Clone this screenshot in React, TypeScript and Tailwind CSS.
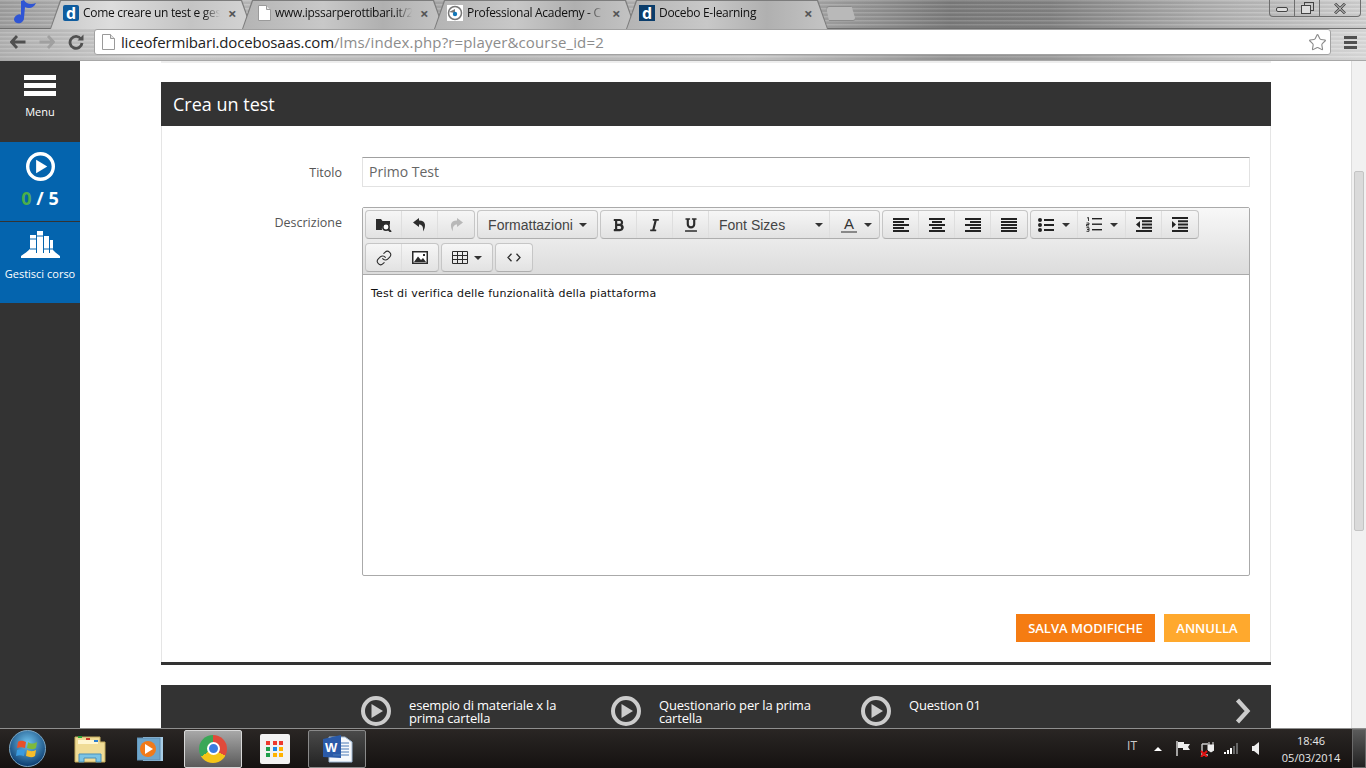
import { ReactNode } from "react";
import { FaBold, FaItalic, FaUnderline } from "react-icons/fa";
import { Link, Star } from "lucide-react";

const TABS = [
    { title: "Come creare un test e ges", icon: "d", active: true },
    { title: "www.ipssarperottibari.it/2", icon: "file", active: false },
    { title: "Professional Academy - C", icon: "ring", active: false },
    { title: "Docebo E-learning", icon: "square", active: false },
];

const NEXT_ITEMS = [
    "esempio di materiale x la prima cartella",
    "Questionario per la prima cartella",
    "Question 01",
];

const PlayCircle = ({ size, color, stroke }: { size: number; color: string; stroke: number }) => (
    <svg width={size} height={size} viewBox="0 0 30 30" className="shrink-0">
        <circle cx="15" cy="15" r={15 - stroke / 2} fill="none" stroke={color} strokeWidth={stroke} />
        <path d="M10.5 8 L22 15 L10.5 22 Z" fill={color} />
    </svg>
);

const FileIcon = () => (
    <svg width="13" height="16" viewBox="0 0 13 16" className="shrink-0">
        <path d="M.5.5h8l4 4v11H.5z" fill="#fff" stroke="#9a9a9a" />
        <path d="M8.5.5v4h4" fill="#e5e5e5" stroke="#9a9a9a" />
    </svg>
);

const TabIcon = ({ kind }: { kind: string }) => {
    if (kind === "file") {
        return (
            <div className="mr-[4px] ml-[3px]">
                <FileIcon />
            </div>
        );
    }
    if (kind === "ring") {
        return (
            <svg width="16" height="16" viewBox="0 0 16 16" className="mr-[4px] shrink-0">
                <rect width="16" height="16" fill="#fff" />
                <circle cx="8" cy="8" r="6.5" fill="none" stroke="#777" strokeWidth="1.5" />
                <path d="M2 7 L8 4 L8 8 Z" fill="#777" />
                <circle cx="8" cy="9" r="2.2" fill="#1277b8" />
            </svg>
        );
    }
    return (
        <div
            className={`mr-[4px] flex h-4 w-4 shrink-0 items-center justify-center text-[16px] leading-none font-bold text-white ${
                kind === "d" ? "rounded-[2px] bg-[#0f5c9e]" : "bg-[#0b3d6b]"
            }`}
        >
            d
        </div>
    );
};

const Tab = ({ title, icon, active }: { title: string; icon: string; active: boolean }) => (
    <div className="-mr-[10px] h-[29px] w-[202px] shrink-0 bg-[#7c7c7c] [clip-path:polygon(0_100%,10px_0,calc(100%-10px)_0,100%_100%)]">
        <div
            className={`mx-[1px] mt-[1px] flex h-[28px] items-center pb-[4px] pl-[12px] [clip-path:polygon(0_100%,10px_0,calc(100%-10px)_0,100%_100%)] ${
                active
                    ? "bg-[linear-gradient(90deg,#c8c8c8,#dddddd_30%,#c4c4c4_70%,#d4d4d4)]"
                    : "bg-[linear-gradient(90deg,#b4b4b4,#c8c8c8_40%,#b0b0b0_70%,#c4c4c4)]"
            }`}
        >
            <TabIcon kind={icon} />
            <div className="w-[137px] shrink-0 overflow-hidden text-[12px] tracking-[-0.3px] whitespace-nowrap text-[#111] [mask-image:linear-gradient(to_right,black_88%,transparent)]">
                {title}
            </div>
            <span className="ml-[8px] text-[15px] leading-none font-bold text-[#555]">×</span>
        </div>
    </div>
);

const ChromeBar = () => (
    <div className="h-[61px] shrink-0 border-b border-[#a8a8a8] bg-[repeating-linear-gradient(180deg,rgba(255,255,255,0.12)_0,rgba(255,255,255,0.12)_1px,rgba(0,0,0,0.05)_2px,rgba(0,0,0,0.05)_4px),linear-gradient(90deg,#a0a0a0,#c6c6c6_140px,#a8a8a8_480px,#bdbdbd_750px,#7c7c7c_950px,#848484_1050px,#b0b0b0_1200px,#d4d4d4_1366px)]">
        <div className="flex h-[29px] items-start border-b border-[#6e6e6e]">
            <div className="w-[50px] shrink-0 pl-[13px]">
                <svg width="25" height="24" viewBox="0 0 25 24">
                    <path
                        d="M8 1 L11 0 C13 4 18 5 23 3 C21 8 16 9 12 7 L11 18 C11 22 7 24 4 23 C0 22 0 17 4 15 C6 14 7 14 8 15 Z"
                        fill="#2f55d4"
                    />
                </svg>
            </div>
            {TABS.map((tab) => (
                <Tab key={tab.title} {...tab} />
            ))}
            <div className="mt-[6px] ml-[8px] h-[15px] w-[30px] rounded-[3px] border border-[#8a8a8a] bg-[#b9b9b9] [clip-path:polygon(0_0,85%_0,100%_100%,10%_100%)]" />
            <div className="mr-[5px] ml-auto flex h-[17px] w-[92px] rounded-b-[4px] border border-t-0 border-[#6e6e6e]">
                <div className="flex w-[25px] items-center justify-center border-r border-[#6e6e6e] pt-[3px]">
                    <div className="h-[5px] w-[12px] rounded-[2px] border border-[#444] bg-[#ddd]" />
                </div>
                <div className="flex w-[25px] items-center justify-center border-r border-[#6e6e6e]">
                    <svg width="13" height="12" viewBox="0 0 13 12" fill="none" stroke="#444">
                        <rect x="3.5" y=".5" width="9" height="8" />
                        <rect x=".5" y="3.5" width="9" height="8" fill="#ddd" />
                    </svg>
                </div>
                <div className="flex flex-1 items-center justify-center">
                    <svg width="12" height="11" viewBox="0 0 12 11">
                        <path d="M1 .5 L11 10.5 M11 .5 L1 10.5" stroke="#444" strokeWidth="2.6" />
                        <path d="M1 .5 L11 10.5 M11 .5 L1 10.5" stroke="#e5e5e5" strokeWidth="1" />
                    </svg>
                </div>
            </div>
        </div>
        <div className="flex h-[31px] items-center bg-white/20 pb-[5px] pl-[10px]">
            <svg width="16" height="14" viewBox="0 0 16 14" className="shrink-0">
                <path d="M7 1 L1.5 7 L7 13 M2 7 H15.5" fill="none" stroke="#505050" strokeWidth="2.8" />
            </svg>
            <svg width="16" height="14" viewBox="0 0 16 14" className="ml-[13px] shrink-0">
                <path d="M9 1 L14.5 7 L9 13 M14 7 H.5" fill="none" stroke="#a0a0a0" strokeWidth="2.8" />
            </svg>
            <svg width="16" height="16" viewBox="0 0 16 16" className="ml-[13px] shrink-0">
                <path d="M13 5 A6 6 0 1 0 14 9" fill="none" stroke="#505050" strokeWidth="2.8" />
                <path d="M9.5 6.5 H15.5 V.5 Z" fill="#505050" />
            </svg>
            <div className="ml-[10px] flex h-[26px] w-[1237px] shrink-0 items-center rounded-[3px] border border-[#a2a2a2] bg-white pl-[7px]">
                <FileIcon />
                <div className="ml-[6px] font-['Open_Sans',sans-serif] text-[15px] tracking-[0.14px] text-[#8c8c8c]">
                    <span className="tracking-[-0.17px] text-[#222]">liceofermibari.docebosaas.com</span>
                    /lms/index.php?r=player&amp;course_id=2
                </div>
                <Star className="mr-[3px] ml-auto h-[19px] w-[19px] text-[#8a8a8a]" strokeWidth={1.4} />
            </div>
            <div className="ml-[13px] flex w-[13px] flex-col gap-[2px]">
                <div className="h-[3px] bg-[#505050]" />
                <div className="h-[3px] bg-[#505050]" />
                <div className="h-[3px] bg-[#505050]" />
            </div>
        </div>
    </div>
);

const Sidebar = () => (
    <div className="flex w-20 shrink-0 flex-col bg-[#333] text-white">
        <div className="flex h-[81px] flex-col items-center pt-[14px]">
            <div className="mr-[1px] flex w-8 flex-col gap-[3px]">
                <div className="h-[5px] bg-white" />
                <div className="h-[5px] bg-white" />
                <div className="h-[5px] bg-white" />
            </div>
            <div className="mt-[8px] text-[11px] leading-[16px]">Menu</div>
        </div>
        <div className="flex h-[80px] flex-col items-center border-b border-[#333] bg-[#0464ae] pt-[10px]">
            <PlayCircle size={29} color="#fff" stroke={3.5} />
            <div className="mt-[7px] text-[18px] leading-[20px] font-bold">
                <span className="text-[#4cae4c]">0</span> / 5
            </div>
        </div>
        <div className="flex h-[81px] flex-col items-center bg-[#0464ae] pt-[9px]">
            <svg width="39" height="27" viewBox="0 0 39 27" fill="#fff">
                <path d="M0 25 C3 23 7 20 10 17 L10 22 H30 L30 17 C33 20 36 23 39 25 V27 H0 Z" />
                <rect x="9" y="4" width="6" height="18" />
                <rect x="16" y="0" width="6" height="22" />
                <rect x="23" y="5" width="5" height="17" />
                <rect x="29" y="9" width="3" height="13" />
                <path d="M9 8h6M16 5h6M9 18h6M23 18h9" stroke="#0464ae" strokeWidth="1" />
            </svg>
            <div className="mt-[8px] text-[11px] leading-[16px] whitespace-nowrap">Gestisci corso</div>
        </div>
    </div>
);

const ToolGroup = ({ children }: { children: ReactNode }) => (
    <div className="flex h-[29px] divide-x divide-[#dedede] rounded-[4px] border border-[#c6c6c6] border-b-[#aeaeae] bg-[linear-gradient(180deg,#f6f6f6,#e2e2e2)] text-[#2c2c2c]">
        {children}
    </div>
);

const ToolBtn = ({ children, width = "w-9" }: { children: ReactNode; width?: string }) => (
    <div className={`flex items-center justify-center ${width}`}>{children}</div>
);

const Caret = () => <div className="h-0 w-0 border-x-[4px] border-t-[4px] border-x-transparent border-t-[#333]" />;

// five thick bars, [left, width] per bar
const BarsIcon = ({ bars }: { bars: number[][] }) => (
    <svg width="16" height="14" viewBox="0 0 16 14" fill="#222">
        {bars.map(([x, w], i) => (
            <rect key={i} x={x} y={i * 3} width={w} height="2" />
        ))}
    </svg>
);

const BulletIcon = () => (
    <svg width="16" height="14" viewBox="0 0 16 14" fill="#222" className="mr-[8px]">
        <circle cx="2" cy="2" r="2" />
        <circle cx="2" cy="7" r="2" />
        <circle cx="2" cy="12" r="2" />
        <rect x="6" y="1" width="10" height="2" />
        <rect x="6" y="6" width="10" height="2" />
        <rect x="6" y="11" width="10" height="2" />
    </svg>
);

const NumberIcon = () => (
    <svg width="16" height="15" viewBox="0 0 16 15" fill="none" stroke="#222" className="mr-[8px]">
        <path d="M1 1 L2.5 .5 V4 M.5 6 H3 V7.5 H.5 V9 H3 M.5 10.7 H3 V14.3 H.5 M1 12.5 H3" strokeWidth=".9" />
        <rect x="6" y="1" width="10" height="1.4" fill="#222" stroke="none" />
        <rect x="6" y="6.5" width="10" height="1.4" fill="#222" stroke="none" />
        <rect x="6" y="12" width="10" height="1.4" fill="#222" stroke="none" />
    </svg>
);

const IndentIcon = ({ out }: { out?: boolean }) => (
    <svg width="16" height="15" viewBox="0 0 16 15" fill="#222">
        <rect x="0" y="0" width="16" height="2" />
        <rect x="0" y="13" width="16" height="2" />
        <rect x="6" y="3.25" width="10" height="2" />
        <rect x="6" y="6.5" width="10" height="2" />
        <rect x="6" y="9.75" width="10" height="2" />
        <path d={out ? "M4 4 V11 L0 7.5 Z" : "M0 4 V11 L4 7.5 Z"} />
    </svg>
);

const UndoIcon = ({ flip, color }: { flip?: boolean; color: string }) => (
    <svg width="15" height="15" viewBox="0 0 15 15" fill={color} className={flip ? "-scale-x-100" : ""}>
        <path d="M7 1 L1 5.5 L7 10 V7.5 C10 7.5 11.5 9.5 11 14.5 C14 10 14.5 3.5 7 3.5 Z" />
    </svg>
);

const Toolbar = () => (
    <div className="flex h-[67px] flex-col gap-[4px] border-b border-[#aaa] bg-[linear-gradient(180deg,#f8f8f8,#dcdcdc)] pt-[2px] pl-[2px]">
        <div className="flex gap-[2px]">
            <ToolGroup>
                <ToolBtn>
                    <svg width="17" height="15" viewBox="0 0 17 15">
                        <path d="M1 2 H6 L7.5 4 H15 V8 A5 5 0 0 0 7 13 H1 Z" fill="#2c2c2c" />
                        <circle cx="11" cy="10" r="3.2" fill="#fff" stroke="#2c2c2c" strokeWidth="1.5" />
                        <path d="M13.3 12.3 L16 15" stroke="#2c2c2c" strokeWidth="2" />
                    </svg>
                </ToolBtn>
                <ToolBtn>
                    <UndoIcon color="#2c2c2c" />
                </ToolBtn>
                <ToolBtn>
                    <UndoIcon flip color="#b8b8b8" />
                </ToolBtn>
            </ToolGroup>
            <ToolGroup>
                <ToolBtn width="w-[119px]">
                    <span className="mt-[1px] mr-[6px] font-['Liberation_Sans',sans-serif] text-[14px] text-[#444]">Formattazioni</span>
                    <Caret />
                </ToolBtn>
            </ToolGroup>
            <ToolGroup>
                <ToolBtn>
                    <FaBold className="h-[14px] w-[13px]" />
                </ToolBtn>
                <ToolBtn>
                    <FaItalic className="h-[14px] w-[13px]" />
                </ToolBtn>
                <ToolBtn>
                    <FaUnderline className="h-[14px] w-[12px]" />
                </ToolBtn>
                <ToolBtn width="w-[121px]">
                    <div className="flex w-full items-center pl-[10px]">
                        <span className="mt-[1px] mr-[30px] font-['Liberation_Sans',sans-serif] text-[14px] text-[#444]">Font Sizes</span>
                        <Caret />
                    </div>
                </ToolBtn>
                <ToolBtn width="w-[49px]">
                    <span className="mr-[7px] ml-[4px] border-b-2 border-[#888] font-['Liberation_Sans',sans-serif] text-[15px] leading-[14px] text-[#333]">
                        &thinsp;A&thinsp;
                    </span>
                    <Caret />
                </ToolBtn>
            </ToolGroup>
            <ToolGroup>
                <ToolBtn>
                    <BarsIcon bars={[[0, 16], [0, 11], [0, 16], [0, 11], [0, 16]]} />
                </ToolBtn>
                <ToolBtn>
                    <BarsIcon bars={[[0, 16], [3, 10], [0, 16], [3, 10], [0, 16]]} />
                </ToolBtn>
                <ToolBtn>
                    <BarsIcon bars={[[0, 16], [5, 11], [0, 16], [5, 11], [0, 16]]} />
                </ToolBtn>
                <ToolBtn>
                    <BarsIcon bars={[[0, 16], [0, 16], [0, 16], [0, 16], [0, 16]]} />
                </ToolBtn>
            </ToolGroup>
            <ToolGroup>
                <ToolBtn width="w-[47px]">
                    <BulletIcon />
                    <Caret />
                </ToolBtn>
                <ToolBtn width="w-[48px]">
                    <NumberIcon />
                    <Caret />
                </ToolBtn>
                <ToolBtn>
                    <IndentIcon out />
                </ToolBtn>
                <ToolBtn>
                    <IndentIcon />
                </ToolBtn>
            </ToolGroup>
        </div>
        <div className="flex gap-[2px]">
            <ToolGroup>
                <ToolBtn>
                    <Link className="h-4 w-4" strokeWidth={1.6} />
                </ToolBtn>
                <ToolBtn>
                    <svg width="16" height="13" viewBox="0 0 16 13">
                        <rect x=".75" y=".75" width="14.5" height="11.5" fill="#fff" stroke="#2c2c2c" strokeWidth="1.5" />
                        <path d="M2 11 L6 5.5 L9 9 L11 7 L14 11 Z" fill="#2c2c2c" />
                        <rect x="11" y="3" width="2" height="2" fill="#2c2c2c" />
                    </svg>
                </ToolBtn>
            </ToolGroup>
            <ToolGroup>
                <ToolBtn width="w-[50px]">
                    <svg width="16" height="13" viewBox="0 0 16 13" fill="none" stroke="#2c2c2c" className="mr-[6px]">
                        <path d="M.5.5h15v12H.5zM.5 4.5h15M.5 8.5h15M5.5.5v12M10.5.5v12" />
                    </svg>
                    <Caret />
                </ToolBtn>
            </ToolGroup>
            <ToolGroup>
                <ToolBtn>
                    <svg width="14" height="9" viewBox="0 0 14 9" fill="none" stroke="#2c2c2c" strokeWidth="1.3">
                        <path d="M4.5 .8 L1 4.5 L4.5 8.2 M9.5 .8 L13 4.5 L9.5 8.2" />
                    </svg>
                </ToolBtn>
            </ToolGroup>
        </div>
    </div>
);

const Editor = () => (
    <div className="flex h-[369px] flex-1 flex-col rounded-[2px] border border-[#aaa] bg-white">
        <Toolbar />
        <div className="px-2 pt-[12px] font-['DejaVu_Sans',sans-serif] text-[11px] leading-[14px] tracking-[0.19px] text-[#111]">
            Test di verifica delle funzionalità della piattaforma
        </div>
    </div>
);

const FormCard = () => (
    <div className="h-[536px] border-x border-[#e5e5e5] px-5 pt-[31px]">
        <div className="flex items-center">
            <div className="mr-5 w-[160px] pt-[2px] text-right text-[12.5px] text-[#555]">Titolo</div>
            <div className="flex h-[30px] flex-1 items-center border border-[#e2e2e2] border-t-[#a0a0a0] px-[6px] pb-[1px] text-[14px] text-[#666]">
                Primo Test
            </div>
        </div>
        <div className="mt-5 flex items-start">
            <div className="mr-5 w-[160px] pt-[7px] text-right text-[12.5px] leading-[18px] text-[#555]">Descrizione</div>
            <Editor />
        </div>
        <div className="mt-[38px] flex justify-end gap-[9px] text-[13px] font-semibold text-white">
            <div className="flex h-7 w-[139px] items-center justify-center bg-[#f57c12] pt-[1px]">SALVA MODIFICHE</div>
            <div className="flex h-7 w-[86px] items-center justify-center bg-[#ffa92d] pt-[1px]">ANNULLA</div>
        </div>
    </div>
);

const NextBar = () => (
    <div className="mt-5 flex h-[43px] items-start bg-[#333] pl-[200px] text-[13px] leading-[13px] tracking-[-0.17px] text-white">
        {NEXT_ITEMS.map((item) => (
            <div className="flex w-[250px] shrink-0 pt-[11px]" key={item}>
                <PlayCircle size={30} color="#ccc" stroke={4} />
                <div className="ml-[18px] w-[170px] pt-[3px]">{item}</div>
            </div>
        ))}
        <svg width="16" height="26" viewBox="0 0 16 26" className="mt-[13px] ml-[124px]">
            <path d="M2.5 2 L12.5 13 L2.5 24" fill="none" stroke="#ccc" strokeWidth="4.2" />
        </svg>
    </div>
);

const Scrollbar = () => (
    <div className="w-[15px] shrink-0 border-l border-[#dcdcdc] bg-[#f1f1f1] pt-[110px] pl-[2px]">
        <div className="h-[360px] w-[10px] rounded-[2px] border border-[#c4c4c4] bg-[#dadada]" />
    </div>
);

const Main = () => (
    <div className="min-w-0 flex-1 overflow-hidden pr-[80px] pl-[81px]">
        <div className="h-[2px] bg-[#eeeeee]" />
        <div className="mt-[19px] flex h-11 items-center bg-[#333] px-3 text-[18px] text-white">Crea un test</div>
        <FormCard />
        <div className="h-[3px] bg-[#333]" />
        <NextBar />
    </div>
);

const TrayIcons = () => (
    <div className="flex items-center">
        <div className="mr-[17px] mb-[6px] text-[12px] text-[#ccc]">IT</div>
        <div className="mr-[14px] h-0 w-0 border-x-[4px] border-b-[4px] border-x-transparent border-b-white" />
        <svg width="14" height="15" viewBox="0 0 14 15" className="mr-[10px]">
            <path d="M1 0 V15" stroke="#fff" strokeWidth="1.2" />
            <path d="M2 1 H8 V3 H14 L12 6 L14 9 H7 V7 H2 Z" fill="#eee" />
        </svg>
        <svg width="14" height="16" viewBox="0 0 14 16" className="mr-[10px]">
            <path d="M2 3 H8 M2 3 V14 H8" fill="none" stroke="#ccc" strokeWidth="1.4" />
            <path d="M8 4 H14 V9 L11 11 L8 9 Z M9 1 V4 M13 1 V4" fill="#eee" stroke="#eee" />
            <path d="M1 10 L7 16 M7 10 L1 16" stroke="#e01010" strokeWidth="2" />
        </svg>
        <svg width="15" height="11" viewBox="0 0 15 11" className="mr-[13px]">
            <rect x="0" y="9" width="2" height="2" fill="#fff" />
            <rect x="3" y="7" width="2" height="4" fill="#fff" />
            <rect x="6" y="5" width="2" height="6" fill="#fff" />
            <rect x="9" y="3" width="2" height="8" fill="#666" />
            <rect x="12" y="0" width="2" height="11" fill="#666" />
        </svg>
        <svg width="7" height="13" viewBox="0 0 7 13">
            <path d="M0 4 H2 L7 0 V13 L2 9 H0 Z" fill="#eee" />
        </svg>
    </div>
);

const Taskbar = () => (
    <div className="flex h-10 shrink-0 items-center border-t border-[#8f8f8f] bg-[linear-gradient(180deg,#2a2624,#151211)]">
        <div className="w-[74px] shrink-0 pl-[9px]">
            <svg width="37" height="37" viewBox="0 0 37 37">
                <defs>
                    <radialGradient id="orb" cx="50%" cy="35%" r="65%">
                        <stop offset="0" stopColor="#6fc3ee" />
                        <stop offset="1" stopColor="#0a3a6e" />
                    </radialGradient>
                </defs>
                <circle cx="18.5" cy="18.5" r="18" fill="url(#orb)" stroke="#7ca6c2" />
                <path d="M9 12 C12 10 14 11 17 12 L16 18 C13 17 11 17 8 18 Z" fill="#e8502a" />
                <path d="M19 12 C22 14 24 14 28 12 L27 18 C24 20 21 19 18 18 Z" fill="#7fba3a" />
                <path d="M8 20 C11 19 13 19 16 20 L15 26 C12 25 10 25 7 26 Z" fill="#3a9be0" />
                <path d="M18 20 C21 21 23 22 27 20 L26 26 C23 28 20 27 17 26 Z" fill="#f6bd2b" />
            </svg>
        </div>
        <div className="w-[63px] shrink-0">
            <svg width="32" height="30" viewBox="0 0 32 30">
                <path d="M1 3 H26 V8 H31 V28 H1 Z" fill="#f0dc96" stroke="#c4ac5e" />
                <path d="M4 6 H24 V10 H4 Z" fill="#fff6d0" />
                <rect x="4" y="2" width="4" height="2" fill="#2fa33a" />
                <rect x="12" y="4" width="4" height="2" fill="#d03a2a" />
                <rect x="20" y="6" width="4" height="2" fill="#2a7ed0" />
                <path d="M5 28 V20 H27 V28 H22 V24 H10 V28 Z" fill="#7cc4e4" stroke="#4a90b8" />
            </svg>
        </div>
        <div className="w-[47px] shrink-0">
            <svg width="26" height="24" viewBox="0 0 26 24">
                <rect x="6" y="0" width="20" height="24" fill="#a8cde6" />
                <rect x="0" y="1" width="23" height="22" fill="#6ea6cc" stroke="#5c8cb0" />
                <circle cx="11" cy="12" r="8" fill="#f07a1a" />
                <path d="M8 7 L16 12 L8 17 Z" fill="#fff" />
            </svg>
        </div>
        <div className="flex h-[38px] w-[58px] shrink-0 items-center justify-center rounded-[2px] border border-[#d8d8d8] bg-[linear-gradient(180deg,#a8a8a8,#5a5a5a)]">
            <div className="flex h-7 w-7 items-center justify-center rounded-full bg-[conic-gradient(#e04a3a_0_33%,#f5c518_33%_66%,#3aa757_66%_100%)]">
                <div className="h-[13px] w-[13px] rounded-full border-2 border-white bg-[#3b7de0]" />
            </div>
        </div>
        <div className="flex w-[66px] shrink-0 justify-center">
            <div className="grid h-[30px] w-[30px] grid-cols-3 content-center justify-center gap-[2px] rounded-[2px] bg-[#f2f2f2] px-[6px]">
                <div className="h-[4px] w-[4px] bg-[#ee3a2e]" />
                <div className="h-[4px] w-[4px] bg-[#ee3a2e]" />
                <div className="h-[4px] w-[4px] bg-[#ee3a2e]" />
                <div className="h-[4px] w-[4px] bg-[#1e9e4a]" />
                <div className="h-[4px] w-[4px] bg-[#1e88e5]" />
                <div className="h-[4px] w-[4px] bg-[#ffb300]" />
                <div className="h-[4px] w-[4px] bg-[#1e9e4a]" />
                <div className="h-[4px] w-[4px] bg-[#ffb300]" />
                <div className="h-[4px] w-[4px] bg-[#ffb300]" />
            </div>
        </div>
        <div className="flex h-[38px] w-[58px] shrink-0 items-center justify-center rounded-[2px] border border-[#8a8a8a] bg-[linear-gradient(180deg,#4a4a4a,#232323)]">
            <svg width="32" height="30" viewBox="0 0 32 30">
                <path d="M8 3 H24 L31 8 V28 H8 Z" fill="#f5f8fc" stroke="#9fb8d4" />
                <path d="M2 5 L20 1 V24 L2 23 Z" fill="#2a5aa8" />
                <path d="M20 9 H28 M20 12 H28 M20 15 H28 M20 18 H28 M12 21 H28" stroke="#4a7ab8" />
                <text x="4" y="18" fontSize="13" fontWeight="700" fill="#fff" fontFamily="Liberation Sans">
                    W
                </text>
            </svg>
        </div>
        <div className="ml-auto flex items-center">
            <TrayIcons />
            <div className="ml-[12px] w-[80px] text-center font-['Open_Sans',sans-serif] text-[11px] leading-[17px] text-[#e8e8e8]">
                <div>18:46</div>
                <div className="whitespace-nowrap">05/03/2014</div>
            </div>
            <div className="ml-[1px] h-[39px] w-[14px] border border-[#6a6a6a] bg-[linear-gradient(180deg,#5a5a5a,#222)]" />
        </div>
    </div>
);

const App = () => {
    return (
        <div className="flex h-[768px] w-[1366px] flex-col overflow-hidden bg-white font-['Open_Sans',sans-serif]">
            <ChromeBar />
            <div className="flex min-h-0 flex-1">
                <Sidebar />
                <Main />
                <Scrollbar />
            </div>
            <Taskbar />
        </div>
    );
};

export default App;
